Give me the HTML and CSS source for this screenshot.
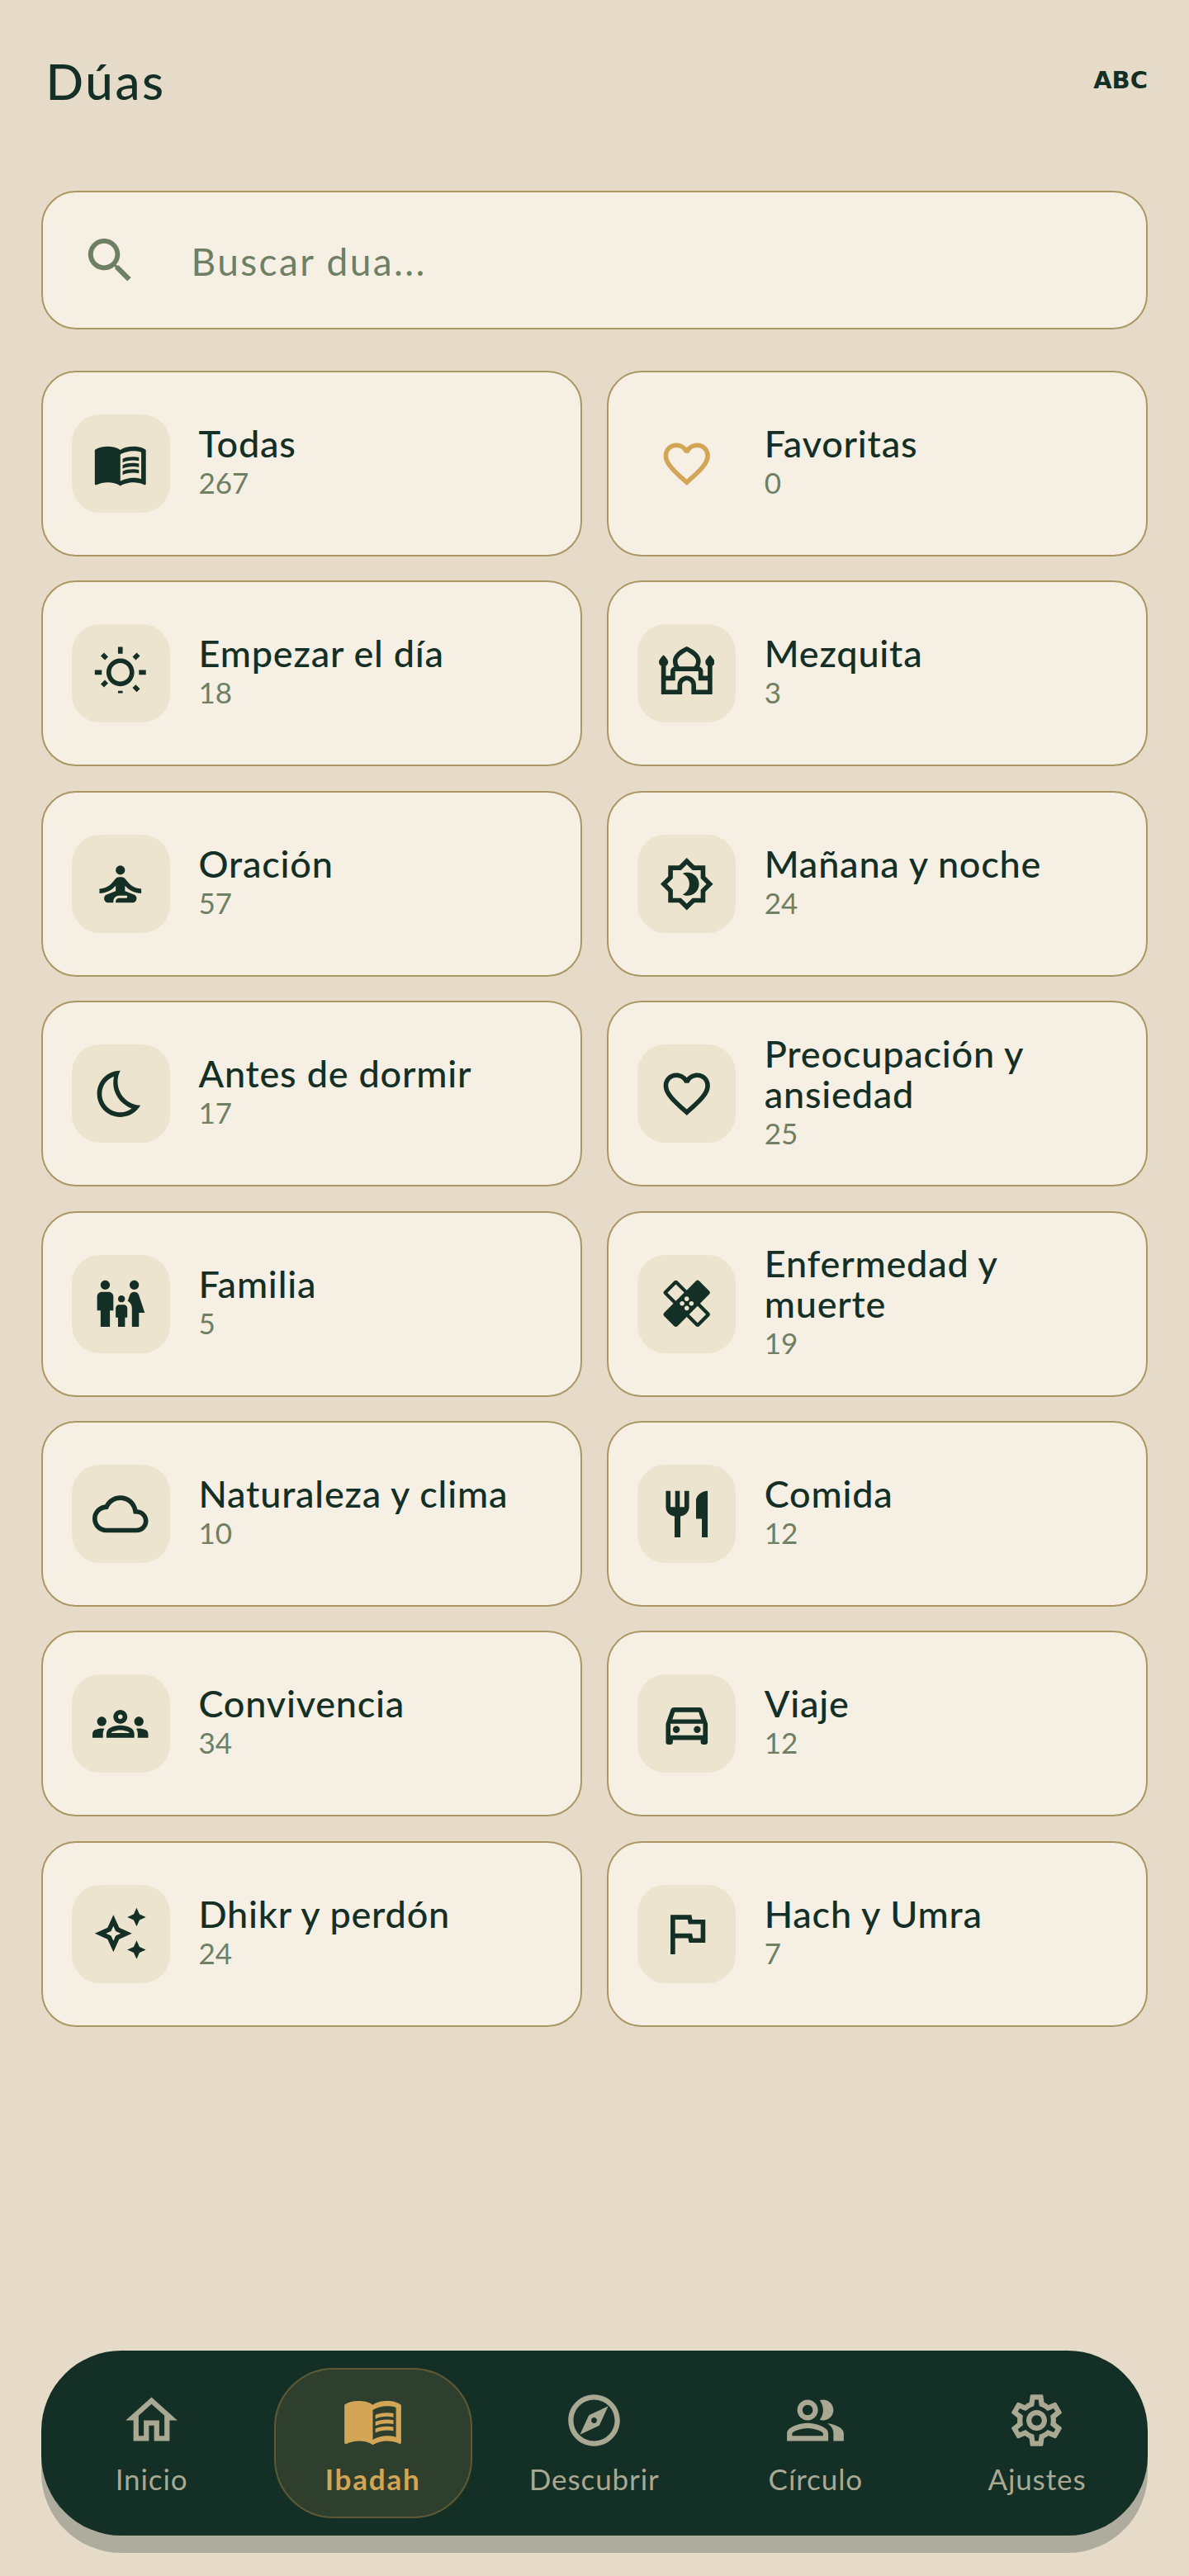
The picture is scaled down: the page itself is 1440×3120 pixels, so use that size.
FILE: index.html
```html
<!DOCTYPE html>
<html lang="es">
<head>
<meta charset="utf-8">
<title>Dúas</title>
<link rel="stylesheet" href="styles.css">
</head>
<body>
<svg class="defs" width="0" height="0" aria-hidden="true">
<defs>
<symbol id="i-book" viewBox="0 0 24 24"><path d="M21 5c-1.11-.35-2.33-.5-3.5-.5-1.95 0-4.05.4-5.5 1.5-1.45-1.1-3.55-1.5-5.5-1.5S2.45 4.9 1 6v14.65c0 .25.25.5.5.5.1 0 .15-.05.25-.05C3.1 20.45 5.05 20 6.5 20c1.95 0 4.05.4 5.5 1.5 1.35-.85 3.8-1.5 5.5-1.5 1.65 0 3.35.3 4.75 1.05.1.05.15.05.25.05.25 0 .5-.25.5-.5V6c-.6-.45-1.25-.75-2-1zm0 13.5c-1.1-.35-2.3-.5-3.5-.5-1.7 0-4.15.65-5.5 1.5V8c1.35-.85 3.8-1.5 5.5-1.5 1.2 0 2.4.15 3.5.5v11.5z"/><path d="M17.5 10.5c.88 0 1.73.09 2.5.26V9.24c-.79-.15-1.64-.24-2.5-.24-1.7 0-3.24.29-4.5.83v1.66c1.13-.64 2.7-.99 4.5-.99zM13 12.49v1.66c1.13-.64 2.7-.99 4.5-.99.88 0 1.73.09 2.5.26V11.9c-.79-.15-1.64-.24-2.5-.24-1.7 0-3.24.3-4.5.83zM17.5 14.33c-1.7 0-3.24.29-4.5.83v1.66c1.13-.64 2.7-.99 4.5-.99.88 0 1.73.09 2.5.26v-1.52c-.79-.16-1.64-.24-2.5-.24z"/></symbol>
<symbol id="i-heart" viewBox="0 0 24 24"><path d="M16.5 3c-1.74 0-3.41.81-4.5 2.09C10.91 3.81 9.24 3 7.5 3 4.42 3 2 5.42 2 8.5c0 3.78 3.4 6.86 8.55 11.54L12 21.35l1.45-1.32C18.6 15.36 22 12.28 22 8.5 22 5.42 19.58 3 16.5 3zm-4.4 15.55l-.1.1-.1-.1C7.14 14.24 4 11.39 4 8.5 4 6.5 5.5 5 7.5 5c1.54 0 3.04.99 3.57 2.36h1.87C13.46 5.99 14.96 5 16.5 5c2 0 3.5 1.5 3.5 3.5 0 2.89-3.14 5.74-7.9 10.05z"/></symbol>
</defs>
</svg>
<div class="page">
  <header class="top">
    <h1 class="title">Dúas</h1>
    <span class="abc">ABC</span>
  </header>

  <div class="search">
    <svg class="search-ic" viewBox="0 0 24 24"><path d="M15.5 14h-.79l-.28-.27C15.41 12.59 16 11.11 16 9.5 16 5.91 13.09 3 9.5 3S3 5.91 3 9.5 5.91 16 9.5 16c1.61 0 3.09-.59 4.23-1.57l.27.28v.79l5 4.99L20.49 19l-4.99-5zm-6 0C7.01 14 5 11.99 5 9.5S7.01 5 9.5 5 14 7.01 14 9.5 11.99 14 9.5 14z"/></svg>
    <span class="search-text">Buscar dua...</span>
  </div>

  <main class="grid">
    <a class="card"><span class="tile"><svg class="ic"><use href="#i-book"/></svg></span><span class="info"><span class="name">Todas</span><span class="count">267</span></span></a>
    <a class="card"><span class="tile tile-plain"><svg class="ic ic-gold"><use href="#i-heart"/></svg></span><span class="info"><span class="name">Favoritas</span><span class="count">0</span></span></a>

    <a class="card"><span class="tile"><svg class="ic" viewBox="0 0 24 24"><path d="M6.76 4.84l-1.8-1.79-1.41 1.41 1.79 1.79 1.42-1.41zM4 10.5H1v2h3v-2zm9-9.95h-2V3.5h2V.55zm7.45 3.91l-1.41-1.41-1.79 1.79 1.41 1.41 1.79-1.79zm-3.21 13.7l1.79 1.8 1.41-1.41-1.8-1.79-1.4 1.4zM20 10.5v2h3v-2h-3zm-8-5c-3.31 0-6 2.69-6 6s2.69 6 6 6 6-2.69 6-6-2.69-6-6-6zm0 10c-2.21 0-4-1.79-4-4s1.79-4 4-4 4 1.79 4 4-1.79 4-4 4zm-1 4.95h2V19.5h-2v2.95zm-7.45-3.91l1.41 1.41 1.79-1.8-1.41-1.41-1.79 1.8z"/></svg></span><span class="info"><span class="name">Empezar el día</span><span class="count">18</span></span></a>
    <a class="card"><span class="tile"><svg class="ic" viewBox="0 0 24 24"><path fill-rule="evenodd" d="M24 7c0-1.1-2-3-2-3s-2 1.9-2 3c0 .74.4 1.38 1 1.72V13h-2v-2c0-.95-.66-1.74-1.55-1.94.34-.72.55-1.55.55-2.43 0-.95-.38-1.99-.98-2.74C15.97 2.59 14.44 1.55 12.58.66L12 .38l-.58.27C9.56 1.54 8.03 2.58 6.98 3.89 6.38 4.64 6 5.68 6 6.63c0 .88.21 1.71.55 2.43C5.66 9.26 5 10.05 5 11v2H3V8.72C3.6 8.38 4 7.74 4 7c0-1.1-2-3-2-3S0 5.9 0 7c0 .74.4 1.38 1 1.72V21h9v-4c0-1.1.9-2 2-2s2 .9 2 2v4h9V8.72c.6-.34 1-.98 1-1.72zM8.55 5.15C9.4 4.1 10.55 3.25 12 2.5c1.45.75 2.6 1.6 3.45 2.65.33.41.55 1 .55 1.48 0 .92-.36 1.75-.9 2.37H8.9C8.36 8.38 8 7.55 8 6.63c0-.48.22-1.07.55-1.48zM21 19h-5v-2c0-2.21-1.79-4-4-4s-4 1.79-4 4v2H3v-4h4v-4h10v4h4v4z"/></svg></span><span class="info"><span class="name">Mezquita</span><span class="count">3</span></span></a>

    <a class="card"><span class="tile"><svg class="ic" viewBox="0 0 24 24"><circle cx="12" cy="6" r="2"/><path d="M21 16v-2c-2.24 0-4.16-.96-5.6-2.68l-1.34-1.6C13.68 9.26 13.12 9 12.53 9h-1.05c-.59 0-1.15.26-1.53.72l-1.34 1.6C7.16 13.04 5.24 14 3 14v2c2.77 0 5.19-1.17 7-3.25V15l-3.88 1.55c-.67.27-1.12.93-1.12 1.66C5 19.2 5.8 20 6.79 20H9v-.5c0-1.38 1.12-2.5 2.5-2.5h3c.28 0 .5.22.5.5s-.22.5-.5.5h-3c-.83 0-1.5.67-1.5 1.5v.5h7.21c.99 0 1.79-.8 1.79-1.79 0-.73-.45-1.39-1.12-1.66L14 15v-2.25c1.81 2.08 4.23 3.25 7 3.25z"/></svg></span><span class="info"><span class="name">Oración</span><span class="count">57</span></span></a>
    <a class="card"><span class="tile"><svg class="ic" viewBox="0 0 24 24"><path d="M20 8.69V4h-4.69L12 .69 8.69 4H4v4.69L.69 12 4 15.31V20h4.69L12 23.31 15.31 20H20v-4.69L23.31 12 20 8.69zm-2 5.79V18h-3.52L12 20.48 9.52 18H6v-3.52L3.52 12 6 9.52V6h3.52L12 3.52 14.48 6H18v3.52L20.48 12 18 14.48zM12.29 7c-.74 0-1.45.17-2.08.46 1.72.79 2.92 2.53 2.92 4.54s-1.2 3.75-2.92 4.54c.63.29 1.34.46 2.08.46 2.76 0 5-2.24 5-5s-2.24-5-5-5z"/></svg></span><span class="info"><span class="name">Mañana y noche</span><span class="count">24</span></span></a>

    <a class="card"><span class="tile"><svg class="ic" viewBox="0 0 24 24"><path d="M9.27 4.49c-1.63 7.54 3.75 12.41 7.66 13.8C15.54 19.38 13.81 20 12.01 20c-4.41 0-8-3.59-8-8 0-3.45 2.2-6.4 5.26-7.51zM11.99 2.01C6.4 2 2 6.53 2 12c0 5.52 4.47 10 9.99 10 3.71 0 6.93-2.02 8.66-5.02-7.51-.25-12.09-8.43-8.66-14.97z"/></svg></span><span class="info"><span class="name">Antes de dormir</span><span class="count">17</span></span></a>
    <a class="card"><span class="tile"><svg class="ic"><use href="#i-heart"/></svg></span><span class="info"><span class="name">Preocupación y ansiedad</span><span class="count">25</span></span></a>

    <a class="card"><span class="tile"><svg class="ic" viewBox="0 0 24 24"><path d="M16 4c0-1.11.89-2 2-2s2 .89 2 2-.89 2-2 2-2-.89-2-2zm4 18v-6h2.5l-2.54-7.63C19.68 7.55 18.92 7 18.06 7h-.12c-.86 0-1.63.55-1.9 1.37l-.86 2.58c1.08.6 1.82 1.73 1.82 3.05v8h3zm-7.5-10.5c.83 0 1.5-.67 1.5-1.5s-.67-1.5-1.5-1.5S11 9.17 11 10s.67 1.5 1.5 1.5zM5.5 6c1.11 0 2-.89 2-2s-.89-2-2-2-2 .89-2 2 .89 2 2 2zm2 16v-7H9V9c0-1.1-.9-2-2-2H4c-1.1 0-2 .9-2 2v6h1.5v7h4zm6.5 0v-4h1v-4c0-.82-.68-1.5-1.5-1.5h-2c-.82 0-1.5.68-1.5 1.5v4h1v4h3z"/></svg></span><span class="info"><span class="name">Familia</span><span class="count">5</span></span></a>
    <a class="card"><span class="tile"><svg class="ic" viewBox="0 0 24 24"><path d="M17.73 12.02l3.98-3.98c.39-.39.39-1.02 0-1.41l-4.34-4.34c-.39-.39-1.02-.39-1.41 0l-3.98 3.98L8 2.29C7.8 2.1 7.55 2 7.29 2c-.25 0-.51.1-.7.29L2.25 6.63c-.39.39-.39 1.02 0 1.41l3.98 3.98L2.25 16c-.39.39-.39 1.02 0 1.41l4.34 4.34c.39.39 1.02.39 1.41 0l3.98-3.98 3.98 3.98c.2.2.45.29.71.29.26 0 .51-.1.71-.29l4.34-4.34c.39-.39.39-1.02 0-1.41l-3.99-3.98zM12 9c.55 0 1 .45 1 1s-.45 1-1 1-1-.45-1-1 .45-1 1-1zm-4.71 1.96L3.66 7.34l3.63-3.63 3.62 3.62-3.62 3.63zM10 13c-.55 0-1-.45-1-1s.45-1 1-1 1 .45 1 1-.45 1-1 1zm2 2c-.55 0-1-.45-1-1s.45-1 1-1 1 .45 1 1-.45 1-1 1zm2-4c.55 0 1 .45 1 1s-.45 1-1 1-1-.45-1-1 .45-1 1-1zm2.66 9.34l-3.63-3.62 3.63-3.63 3.62 3.62-3.62 3.63z"/></svg></span><span class="info"><span class="name">Enfermedad y muerte</span><span class="count">19</span></span></a>

    <a class="card"><span class="tile"><svg class="ic" viewBox="0 0 24 24"><path d="M12 6c2.62 0 4.88 1.86 5.39 4.43l.3 1.5 1.53.11c1.56.1 2.78 1.41 2.78 2.96 0 1.65-1.35 3-3 3H6c-2.21 0-4-1.79-4-4 0-2.05 1.53-3.76 3.56-3.97l1.07-.11.5-.95C8.08 7.14 9.94 6 12 6m0-2C9.11 4 6.6 5.64 5.35 8.04 2.34 8.36 0 10.91 0 14c0 3.31 2.69 6 6 6h13c2.76 0 5-2.24 5-5 0-2.64-2.05-4.78-4.65-4.96C18.67 6.59 15.64 4 12 4z"/></svg></span><span class="info"><span class="name">Naturaleza y clima</span><span class="count">10</span></span></a>
    <a class="card"><span class="tile"><svg class="ic" viewBox="0 0 24 24"><path d="M11 9H9V2H7v7H5V2H3v7c0 2.12 1.66 3.84 3.75 3.97V22h2.5v-9.03C11.34 12.84 13 11.12 13 9V2h-2v7zm5-3v8h2.5v8H21V2c-2.76 0-5 2.24-5 4z"/></svg></span><span class="info"><span class="name">Comida</span><span class="count">12</span></span></a>

    <a class="card"><span class="tile"><svg class="ic" viewBox="0 0 24 24"><path d="M4 13c1.1 0 2-.9 2-2s-.9-2-2-2-2 .9-2 2 .9 2 2 2zm1.13 1.1c-.37-.06-.74-.1-1.13-.1-.99 0-1.93.21-2.78.58C.48 14.9 0 15.62 0 16.43V18h4.5v-1.61c0-.83.23-1.61.63-2.29zM20 13c1.1 0 2-.9 2-2s-.9-2-2-2-2 .9-2 2 .9 2 2 2zm4 3.43c0-.81-.48-1.53-1.22-1.85-.85-.37-1.79-.58-2.78-.58-.39 0-.76.04-1.13.1.4.68.63 1.46.63 2.29V18H24v-1.57zm-7.76-2.78c-1.17-.52-2.61-.9-4.24-.9-1.63 0-3.07.39-4.24.9C6.68 14.13 6 15.21 6 16.39V18h12v-1.61c0-1.18-.68-2.26-1.76-2.74zM8.07 16c.09-.23.13-.39.91-.69.97-.38 1.99-.56 3.02-.56s2.05.18 3.02.56c.77.3.81.46.91.69H8.07zM12 8c.55 0 1 .45 1 1s-.45 1-1 1-1-.45-1-1 .45-1 1-1m0-2c-1.66 0-3 1.34-3 3s1.34 3 3 3 3-1.34 3-3-1.34-3-3-3z"/></svg></span><span class="info"><span class="name">Convivencia</span><span class="count">34</span></span></a>
    <a class="card"><span class="tile"><svg class="ic" viewBox="0 0 24 24"><path d="M18.92 6.01C18.72 5.42 18.16 5 17.5 5h-11c-.66 0-1.21.42-1.42 1.01L3 12v8c0 .55.45 1 1 1h1c.55 0 1-.45 1-1v-1h12v1c0 .55.45 1 1 1h1c.55 0 1-.45 1-1v-8l-2.08-5.99zM6.85 7h10.29l1.08 3.11H5.77L6.85 7zM19 17H5v-5h14v5z"/><circle cx="7.5" cy="14.5" r="1.5"/><circle cx="16.5" cy="14.5" r="1.5"/></svg></span><span class="info"><span class="name">Viaje</span><span class="count">12</span></span></a>

    <a class="card"><span class="tile"><svg class="ic" viewBox="0 0 24 24"><path d="M19 9l1.25-2.75L23 5l-2.75-1.25L19 1l-1.25 2.75L15 5l2.75 1.25L19 9zm-7.5.5L9 4 6.5 9.5 1 12l5.5 2.5L9 20l2.5-5.5L17 12l-5.5-2.5zM9.99 12.99L9 15.17l-.99-2.18L5.83 12l2.18-.99L9 8.83l.99 2.18 2.18.99-2.18.99zM19 15l-1.25 2.75L15 19l2.75 1.25L19 23l1.25-2.75L23 19l-2.75-1.25L19 15z"/></svg></span><span class="info"><span class="name">Dhikr y perdón</span><span class="count">24</span></span></a>
    <a class="card"><span class="tile"><svg class="ic" viewBox="0 0 24 24"><path d="M12.36 6l.4 2H18v6h-3.36l-.4-2H7V6h5.36M14 4H5v17h2v-7h5.6l.4 2h7V6h-5.6L14 4z"/></svg></span><span class="info"><span class="name">Hach y Umra</span><span class="count">7</span></span></a>
  </main>

  <nav class="nav">
    <a class="tab">
      <svg class="tab-ic" viewBox="0 0 24 24"><path d="M12 5.69l5 4.5V18h-2v-6H9v6H7v-7.81l5-4.5M12 3L2 12h3v8h6v-6h2v6h6v-8h3L12 3z"/></svg>
      <span class="tab-label">Inicio</span>
    </a>
    <a class="tab tab-active">
      <svg class="tab-ic"><use href="#i-book"/></svg>
      <span class="tab-label">Ibadah</span>
    </a>
    <a class="tab">
      <svg class="tab-ic" viewBox="0 0 24 24"><path d="M12 2C6.48 2 2 6.48 2 12s4.48 10 10 10 10-4.48 10-10S17.52 2 12 2zm0 18c-4.41 0-8-3.59-8-8s3.59-8 8-8 8 3.59 8 8-3.59 8-8 8zm-5.5-2.5l7.51-3.49L17.5 6.5 9.99 9.99 6.5 17.5zm5.5-6.6c.61 0 1.1.49 1.1 1.1s-.49 1.1-1.1 1.1-1.1-.49-1.1-1.1.49-1.1 1.1-1.1z"/></svg>
      <span class="tab-label">Descubrir</span>
    </a>
    <a class="tab">
      <svg class="tab-ic" viewBox="0 0 24 24"><path d="M16.67 13.13C18.04 14.06 19 15.32 19 17v3h4v-3c0-2.18-3.57-3.47-6.33-3.87zM15 12c2.21 0 4-1.79 4-4s-1.79-4-4-4c-.47 0-.91.1-1.33.24C14.5 5.27 15 6.58 15 8s-.5 2.73-1.33 3.76c.42.14.86.24 1.33.24zM9 12c2.21 0 4-1.79 4-4s-1.79-4-4-4-4 1.79-4 4 1.79 4 4 4zm0-6c1.1 0 2 .9 2 2s-.9 2-2 2-2-.9-2-2 .9-2 2-2zM9 13c-2.67 0-8 1.34-8 4v3h16v-3c0-2.66-5.33-4-8-4zm6 5H3v-.99C3.2 16.29 6.3 15 9 15s5.8 1.29 6 2z"/></svg>
      <span class="tab-label">Círculo</span>
    </a>
    <a class="tab">
      <svg class="tab-ic" viewBox="0 0 24 24"><path d="M19.43 12.98c.04-.32.07-.64.07-.98 0-.34-.03-.66-.07-.98l2.11-1.65c.19-.15.24-.42.12-.64l-2-3.46c-.09-.16-.26-.25-.44-.25-.06 0-.12.01-.17.03l-2.49 1c-.52-.4-1.08-.73-1.69-.98l-.38-2.65C14.46 2.18 14.25 2 14 2h-4c-.25 0-.46.18-.49.42l-.38 2.65c-.61.25-1.17.59-1.69.98l-2.49-1c-.06-.02-.12-.03-.18-.03-.17 0-.34.09-.43.25l-2 3.46c-.13.22-.07.49.12.64l2.11 1.65c-.04.32-.07.65-.07.98 0 .33.03.66.07.98l-2.11 1.65c-.19.15-.24.42-.12.64l2 3.46c.09.16.26.25.44.25.06 0 .12-.01.17-.03l2.49-1c.52.4 1.08.73 1.69.98l.38 2.65c.03.24.24.42.49.42h4c.25 0 .46-.18.49-.42l.38-2.65c.61-.25 1.17-.59 1.69-.98l2.49 1c.06.02.12.03.18.03.17 0 .34-.09.43-.25l2-3.46c.12-.22.07-.49-.12-.64l-2.11-1.65zm-1.98-1.71c.04.31.05.52.05.73 0 .21-.02.43-.05.73l-.14 1.13.89.7 1.08.84-.7 1.21-1.27-.51-1.04-.42-.9.68c-.43.32-.84.56-1.25.73l-1.06.43-.16 1.13-.2 1.35h-1.4l-.19-1.35-.16-1.13-1.06-.43c-.43-.18-.83-.41-1.23-.71l-.91-.7-1.06.43-1.27.51-.7-1.21 1.08-.84.89-.7-.14-1.13c-.03-.31-.05-.54-.05-.74s.02-.43.05-.73l.14-1.13-.89-.7-1.08-.84.7-1.21 1.27.51 1.04.42.9-.68c.43-.32.84-.56 1.25-.73l1.06-.43.16-1.13.2-1.35h1.39l.19 1.35.16 1.13 1.06.43c.43.18.83.41 1.23.71l.91.7 1.06-.43 1.27-.51.7 1.21-1.07.85-.89.7.14 1.13zM12 8c-2.21 0-4 1.79-4 4s1.79 4 4 4 4-1.79 4-4-1.79-4-4-4zm0 6c-1.1 0-2-.9-2-2s.9-2 2-2 2 .9 2 2-.9 2-2 2z"/></svg>
      <span class="tab-label">Ajustes</span>
    </a>
  </nav>
</div>
</body>
</html>
```

FILE: styles.css
```css
* { box-sizing: border-box; }
html, body { margin: 0; padding: 0; }
body {
  background: #e5dbc8;
  color: #142f25;
  font-family: "Lato", "Noto Sans", sans-serif;
}
.defs { position: absolute; }
.page {
  height: 3120px;
  padding: 0 50px 49px 49.5px;
  display: flex;
  flex-direction: column;
}
.top {
  display: flex;
  justify-content: space-between;
  align-items: center;
  padding: 62px 0 97px 6px;
}
.title {
  margin: 0;
  font-size: 60px;
  line-height: 72px;
  font-weight: 500;
  letter-spacing: 2.6px;
}
.abc {
  font-family: "DejaVu Sans", sans-serif;
  font-weight: 700;
  font-size: 29px;
  line-height: 30px;
  margin-top: -2px;
}
.search {
  height: 168px;
  display: flex;
  align-items: center;
  gap: 63px;
  padding-left: 46px;
  background: #f6f0e4;
  border: 2px solid #ab9764;
  border-radius: 42px;
  margin-bottom: 50px;
}
.search-ic { width: 71px; height: 71px; fill: #6f7f63; flex: none; }
.search-text {
  font-size: 46px;
  line-height: 56px;
  color: #6f7f63;
  letter-spacing: 2.4px;
  padding-top: 3px;
}
.grid {
  display: grid;
  grid-template-columns: 1fr 1fr;
  grid-auto-rows: 225px;
  gap: 29.4px 30px;
}
.card {
  display: flex;
  align-items: center;
  gap: 35px;
  padding: 0 50px 0 35px;
  background: #f6f0e4;
  border: 2px solid #ab9764;
  border-radius: 42px;
}
.tile {
  width: 119px;
  height: 119px;
  flex: none;
  display: flex;
  align-items: center;
  justify-content: center;
  background: #ede4cf;
  border-radius: 34px;
}
.tile-plain { background: transparent; }
.ic { width: 67.5px; height: 67.5px; fill: #142f25; }
.ic-gold { fill: #d2a557; }
.info {
  display: flex;
  flex-direction: column;
  min-width: 0;
  margin-bottom: 3px;
}
.name {
  font-size: 45px;
  line-height: 49px;
  font-weight: 500;
  letter-spacing: 0.8px;
  color: #142f25;
}
.count {
  font-size: 35px;
  line-height: 45px;
  color: #6f7f63;
}
.nav {
  margin-top: auto;
  height: 224px;
  display: flex;
  background: #142f25;
  border-radius: 97px;
  box-shadow: 0 21px 0 #aeac9d;
}
.tab {
  flex: 1 1 0;
  margin: 21px 14px;
  padding-top: 24px;
  display: flex;
  flex-direction: column;
  align-items: center;
  color: #a9a892;
  border: 2px solid transparent;
  border-radius: 72px;
}
.tab-ic { width: 75px; height: 75px; fill: currentColor; flex: none; }
.tab-label {
  margin-top: 11px;
  font-size: 35px;
  line-height: 44px;
  letter-spacing: 0.9px;
}
.tab-active {
  background: #2f3f2d;
  border-color: #5d5a35;
  color: #d2a557;
}
.tab-active .tab-label { font-weight: 700; letter-spacing: 1.8px; }
```
